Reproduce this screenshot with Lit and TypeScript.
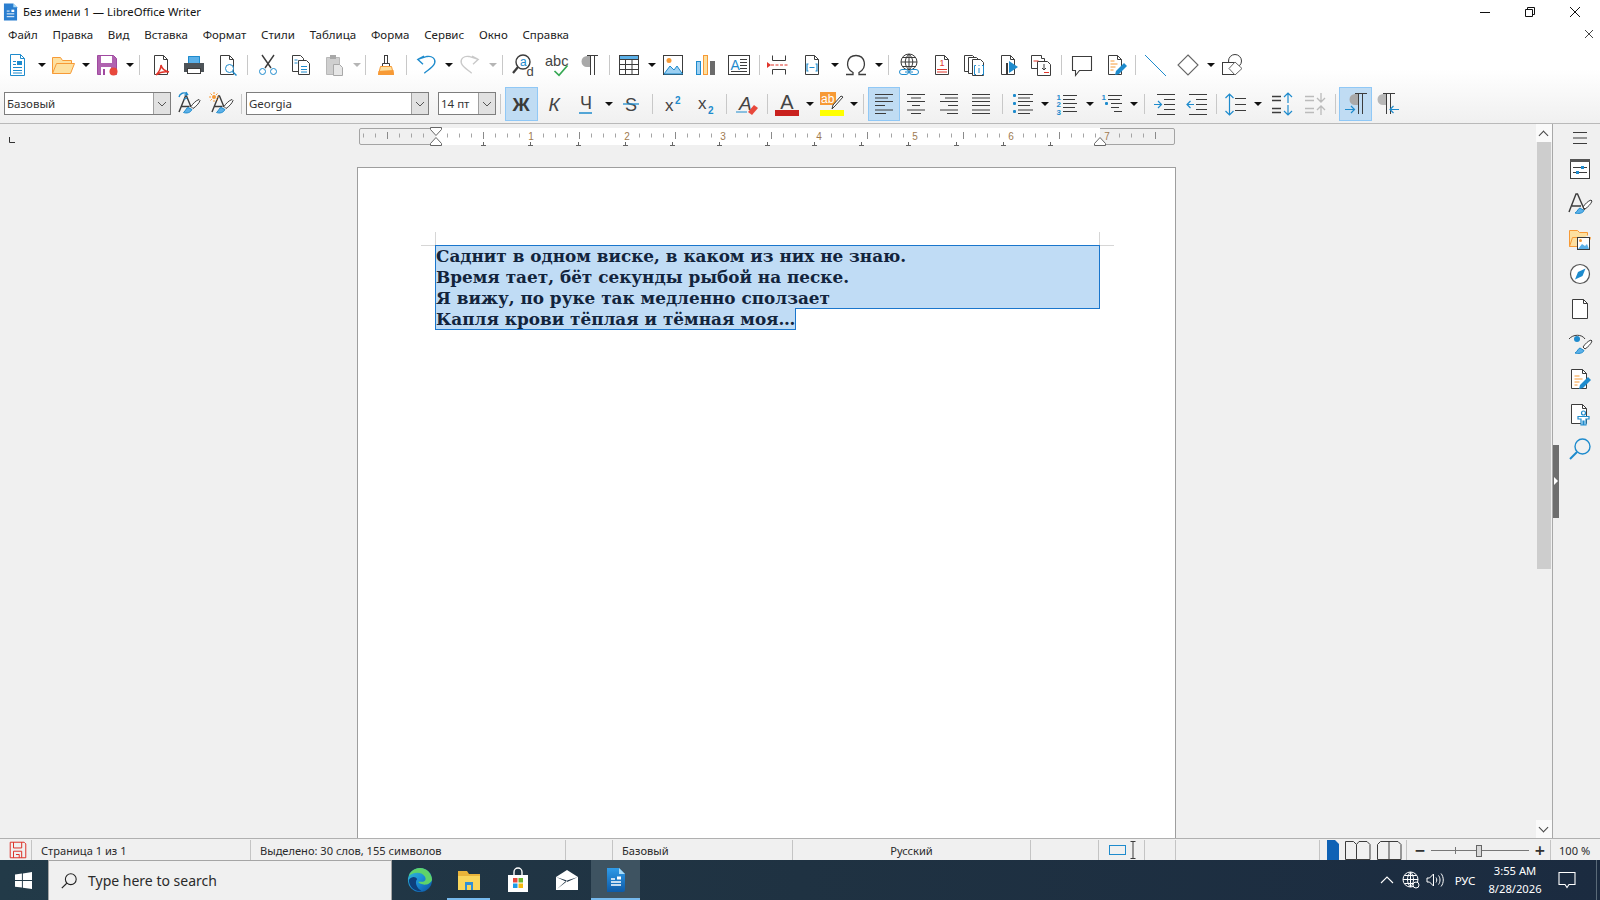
import { LitElement, html, css, svg, TemplateResult } from "lit";
import { customElement } from "lit/decorators.js";

const doc = svg`<path class="d fw" d="M5.5 2.5h9l4 4v15h-13z"/><path class="d" d="M14.5 2.5v4h4"/>`;
const brush = svg`<path class="d fw" d="M23 7.5c-3 1-6 4-8 7l2 2c3-2 6-5 7-8z"/><path class="b fl" d="M12 15.5c-2 .5-2 3-4.500 5 3 1 7 .5 8.500-3z"/>`;
const letterA = svg`<path class="d2" d="M3 20L9.500 4h1L15 15M5.500 14.500h8"/>`;
const alignRows = [2.5, 6, 9.5, 13.5, 18, 21.5];

// six text lines of an alignment icon; each pair is the start and end of a row
function aligned(spans: number[][]) {
  const d = spans.map(([a, z], i) => `M${a} ${alignRows[i]}H${z}`).join("");
  return svg`<path class="d" d="${d}"/>`;
}

const ICONS: Record<string, TemplateResult> = {
  new: svg`<path class="b fw" d="M3.500 1.500h10l4 4v17h-14z"/><path class="b" d="M13.500 1.500v4h4M6 8.500h3M6 11.500h3M6 14.500h9M6 17.500h9M6 20h9"/><rect class="fb" x="10" y="8" width="5" height="4"/>`,
  open: svg`<path class="o fy" d="M1.500 20.500V4.500h8l2 3h9v3"/><path class="o fy" d="M1.500 20.500l4-10h18l-4 10z"/>`,
  save: svg`<path fill="#b063b0" stroke="#a04aa0" d="M2.500 2.500h16l3 3v16h-19z"/><rect class="fw" x="6" y="3" width="11" height="7"/><rect class="fw" x="6" y="14" width="10" height="8"/><rect fill="#a04aa0" x="8" y="16" width="2" height="6"/><circle cx="18.500" cy="18.500" r="4" fill="#e8483c"/>`,
  pdf: svg`${doc}<path class="r" stroke-width="1.500" d="M7 22c3-3 5-7 5-10 1 4 3 6 8 7-5-1-9 0-13 3z"/>`,
  print: svg`<path fill="#4d5358" d="M2 10h20v9h-3v-3H5v3H2z"/><rect class="fl" x="6" y="3" width="12" height="7"/><path class="b" d="M6.500 10V3.500h11V10"/><rect class="fw d" x="5.500" y="15.500" width="13" height="5"/>`,
  preview: svg`${doc}<circle class="b fw" cx="14.500" cy="15.500" r="4"/><path class="b" stroke-width="1.500" d="M17.500 18.500l4 4"/>`,
  cut: svg`<path class="d2" d="M6 2l9 13M18 2L9 15"/><circle class="b" cx="6.500" cy="18.500" r="3"/><circle class="b" cx="17.500" cy="18.500" r="3"/>`,
  copy: svg`<path class="d fw" d="M3.500 2.500h8l3 3v13h-11z"/><path class="d fw" d="M9.500 7.500h8l3 3v11h-11z"/><path class="b" d="M12 13.500h6M12 16.500h6M12 19h6M5.500 7h3M5.500 10h3"/>`,
  paste: svg`<path fill="#cfcfcf" stroke="#b8b8b8" d="M4.500 4.500h13v17h-13z"/><rect fill="#a8a8a8" x="8" y="2" width="6" height="4"/><path fill="#e6e6e6" stroke="#a8a8a8" d="M11.500 11.500h6l3 3v8h-9z"/>`,
  clone: svg`<rect class="d fw" x="10.500" y="2.500" width="3" height="8"/><path class="d fw" d="M8.500 10.500h7v3h-7z"/><path class="o fy" d="M6.500 13.500h11l2 8h-15z"/><path fill="#f79a36" d="M4.500 18l15-1 .5 5H4z"/>`,
  undo: svg`<path class="b" stroke-width="1.300" d="M10 3L3.700 6.300 9 11.300M3.700 6.300L13 3.500C18 2.500 22 6 20.700 10c-1.200 4-6.700 7-10.400 10.300"/>`,
  redo: svg`<path stroke="#c9c9c9" stroke-width="1.300" d="M14 3l6.300 3.300-5.300 5M20.300 6.300L11 3.500C6 2.500 2 6 3.300 10c1.200 4 6.700 7 10.400 10.300"/>`,
  find: svg`<circle class="d2" cx="11" cy="9" r="7"/><path class="d" stroke-width="2.200" d="M6 14l-5 6"/><text class="tb" x="8" y="13" font-size="12">a</text><text class="td" x="14.500" y="23" font-size="13">d</text>`,
  abc: svg`<text class="td" x="0" y="13" font-size="14.500">abc</text><path stroke="#35a853" stroke-width="1.700" d="M9.500 18l4.500 4.300 8.500-9.800"/>`,
  pilcrow: svg`<path fill="#a9a9a9" d="M12 3H9a5.500 5.500 0 0 0 0 11h3z"/><path class="d" d="M12.500 3v19M16.500 3v19M9 2.500h11"/>`,
  table: svg`<rect class="fl" x="2" y="2" width="20" height="4"/><rect class="d" x="2.500" y="2.500" width="19" height="19"/><path class="d" d="M2.500 6.500h19M2.500 11.500h19M2.500 16.500h19M8.500 6.500v15M15 6.500v15"/>`,
  image: svg`<rect class="d fw" x="2.500" y="2.500" width="19" height="19"/><circle fill="#f79a36" cx="8" cy="7.500" r="2.500"/><path class="b" fill="#9cd0f2" d="M3 21l6-8 4 4 3-4 5.500 8z"/>`,
  chart: svg`<rect class="b" fill="#9cd0f2" x="2.500" y="8.500" width="4" height="13"/><rect class="o fy" x="9.500" y="2.500" width="4" height="19"/><rect fill="#6b6b6b" x="16" y="8" width="5" height="14"/>`,
  textbox: svg`<rect class="d fw" x="1.500" y="2.500" width="21" height="19"/><text class="tb" x="3.500" y="16.500" font-size="14">A</text><path class="d" d="M13 6.500h7M13 9.500h7M13 12.500h7M13 15.500h7M4 18.500h16"/>`,
  pbreak: svg`<path class="d" d="M5.500 2.500v5h13v-5M5.500 21.500v-5h13v5"/><path class="r" stroke-width="1.200" stroke-dasharray="3 1.500" d="M4 12h17"/><path fill="#e0352b" d="M0 9l4 3-4 3z"/>`,
  field: svg`${doc}<path class="b" stroke-width="1.200" d="M8.500 11H7v7h1.500M15.500 11H17v7h-1.500M9.500 14.500h5"/>`,
  omega: svg`<path class="d" stroke-width="1.300" d="M2 21.500h7v-2c-9-5-6-17 3-17s12 12 3 17v2h7"/>`,
  link: svg`<circle class="d" cx="12" cy="9" r="8"/><path class="d" d="M12 1v16M4 9h16M5.500 4.500h13M5.500 13.500h13M12 1c-5 5-5 11 0 16M12 1c5 5 5 11 0 16"/><rect class="b fw" x="2.500" y="16.500" width="9" height="5" rx="2.500"/><rect class="b fw" x="12.500" y="16.500" width="9" height="5" rx="2.500"/><path class="b" d="M8 19h8"/>`,
  footnote: svg`${doc}<text class="tred" x="9.500" y="13" font-size="9">1</text><path class="r" d="M7 16.500h10M7 19h10"/>`,
  endnote: svg`<path class="d fw" d="M1.500 2.500h8l3 3v13h-11z"/><path class="d fw" d="M5.500 4.500h8l3 3v13h-11z"/><path class="d fw" d="M9.500 6.500h8l3 3v13h-11z"/><path class="b" d="M13 12.500h-1.500v9H13M19 12.500h1.500v9H19"/><path class="b" d="M16 12v1M16 15v5"/>`,
  bookmark: svg`${doc}<path class="d" stroke-width="2" d="M11 10v12"/><path class="fb" d="M13 8l9 6-9 6z"/>`,
  crossref: svg`<path class="d fw" d="M2.500 2.500h10v3h3v10h-13z"/><path class="d fw" d="M8.500 8.500h10l3 3v11h-13z"/><path class="r" d="M4.500 8h5M15 19.500h5"/><path class="d" d="M15 11v6M13 15l2 2 2-2"/>`,
  comment: svg`<path class="d" stroke-width="1.100" d="M2.500 3.500h19v14H9.500l-4 5v-5h-3z"/>`,
  track: svg`${doc}<path class="o" d="M7.500 8h4M7.500 11h7M7.500 14h5M7.500 17h3"/><path class="fb" d="M12 22l1-4 8-8 3 3-8 8z"/>`,
  line: svg`<path class="b" d="M2 2l21 21"/>`,
  diamond: svg`<path stroke="#666" stroke-width="1.100" class="fw" d="M12 2l10 10-10 10L2 12z"/>`,
  shapes: svg`<circle class="d" cx="15" cy="8" r="6.500"/><rect class="d fw" x="2.500" y="9.500" width="12" height="12"/><path stroke="#666" class="fw" d="M15 9l7 6.500-7 6.500-6-6.500z"/>`,
  update: svg`${letterA}${brush}<path class="b" stroke-width="1.400" d="M3 5a5 5 0 0 1 8-3M10 0l1.500 2.500-3 .5M11 6a5 5 0 0 1-3 1"/>`,
  newstyle: svg`${letterA}${brush}<circle fill="#f79a36" cx="5" cy="5" r="2"/><path class="o" d="M5 0v2M5 8v2M0 5h2M8 5h2M1.500 1.500l1.500 1.500M7 7l1.500 1.500M8.500 1.500L7 3M3 7L1.500 8.500"/>`,
  bold: svg`<text class="tbold" x="12" y="18.500" font-size="19" text-anchor="middle">Ж</text>`,
  italic: svg`<text class="tdk" font-style="italic" x="12" y="18.500" font-size="19" text-anchor="middle">К</text>`,
  under: svg`<text class="tdk" x="12" y="17" font-size="18" text-anchor="middle">Ч</text><path class="b" stroke-width="1.500" d="M5 21h13"/>`,
  strike: svg`<text class="tdk" x="12" y="18.500" font-size="18" text-anchor="middle">S</text><path class="b" stroke-width="1.300" d="M4 12h16"/>`,
  sup: svg`<text class="tdk" x="4" y="19" font-size="17">x</text><text class="tbs" x="14" y="12" font-size="10">2</text>`,
  sub: svg`<text class="tdk" x="4" y="17" font-size="17">x</text><text class="tbs" x="14" y="22" font-size="10">2</text>`,
  clear: svg`<text class="tdk" font-style="italic" x="4" y="18" font-size="19">A</text><path class="b" d="M1 20h11"/><path fill="#e8483c" d="M13 20l6-7 4 3-6 7z"/>`,
  color: svg`<text class="tdk" x="12" y="16.500" font-size="20" text-anchor="middle">A</text><rect fill="#c9211e" x="0" y="18" width="24" height="6"/>`,
  hilite: svg`<rect fill="#f79a36" x="0" y="0" width="16" height="13"/><text fill="#fff" x="1" y="11" font-size="12">ab</text><path class="d fw" d="M23 5l-8 9-3 3 1-4 8-9z"/><rect fill="#ffff00" x="0" y="18" width="24" height="6"/>`,
  left: aligned([[3, 21], [3, 16], [3, 21], [3, 13], [3, 21], [3, 14]]),
  center: aligned([[3, 21], [7, 17], [3, 21], [8, 16], [3, 21], [7, 17]]),
  right: aligned([[3, 21], [8, 21], [3, 21], [11, 21], [3, 21], [10, 21]]),
  justify: aligned([[3, 21], [3, 21], [3, 21], [3, 21], [3, 21], [3, 21]]),
  bullets: svg`<path class="d" d="M7 2.500h15M7 6h12M7 9.500h15M7 13.500h12M7 18h15M7 21.500h12"/><rect class="fb" x="2" y="2" width="3" height="3" rx="1"/><rect class="fb" x="2" y="10" width="3" height="3" rx="1"/><rect class="fb" x="2" y="18" width="3" height="3" rx="1"/>`,
  numbers: svg`<path class="d" d="M8 3.500h14M8 7.500h12M8 11.500h14M8 15.500h12M8 19.500h14"/><text class="tbs" x="1.500" y="7.500" font-size="8">1</text><text class="tbs" x="1.500" y="15" font-size="8">2</text><text class="tbs" x="1.500" y="23" font-size="8">3</text>`,
  outline: svg`<path class="d" d="M8 3.500h14M8 7.500h12M11 11.500h11M11 15.500h8M14 19.500h8"/><text class="tbs" x="1.500" y="7.500" font-size="8">1</text><rect class="fb" x="5" y="10" width="3" height="3" rx="1"/>`,
  indent: svg`<path class="d" d="M4 2.500h18M11 7.500h11M11 12.500h11M11 17.500h11M4 22.500h18"/><path class="b" stroke-width="1.200" d="M1 12.500h7M5 9l3.500 3.500L5 16"/>`,
  outdent: svg`<path class="d" d="M4 2.500h18M11 7.500h11M11 12.500h11M11 17.500h11M4 22.500h18"/><path class="b" stroke-width="1.200" d="M2 12.500h7M5.500 9L2 12.500 5.500 16"/>`,
  spacing: svg`<path class="b" stroke-width="1.200" d="M5.500 2v21M1.500 6l4-4 4 4M1.500 19l4 4 4-4"/><path class="d" d="M11 6.500h11M11 12.500h11M11 18.500h11"/>`,
  incpar: svg`<path class="d" stroke-width="1.300" d="M1 4.500h9M1 8.500h9M1 16.500h9M1 20.500h9"/><path class="b" stroke-width="1.200" d="M17 11V1M13 5l4-4 4 4M17 13v10M13 19l4 4 4-4"/>`,
  decpar: svg`<path stroke="#bbb" stroke-width="1.300" d="M1 4.500h9M1 8.500h9M1 16.500h9M1 20.500h9M17 1v9M13 6l4 4 4-4M17 23v-9M13 18l4-4 4 4"/>`,
  ltr: svg`<path fill="#a9a9a9" d="M14 2h-3a5.500 5.500 0 0 0 0 11h3z"/><path class="d" d="M14.500 2v20M18.500 2v20M11 1.500h12"/><path class="b" stroke-width="1.200" d="M1 17.500h9M7 14l3.500 3.500L7 21"/>`,
  rtl: svg`<path fill="#b8b8b8" d="M10 2H7a5.500 5.500 0 0 0 0 11h3z"/><path class="d" d="M10.500 2v20M14.500 2v20M7 1.500h12"/><path class="b" stroke-width="1.200" d="M14 17.500h9M17.500 14L14 17.500l3.500 3.500"/>`,
  // sidebar
  sb_menu: svg`<path class="d" stroke-width="1.200" d="M5 6.500h14M5 12h14M5 17.500h14"/>`,
  sb_props: svg`<rect class="d fw" x="2.500" y="2.500" width="19" height="19"/><rect fill="#555" x="2" y="2" width="20" height="3"/><path class="d" d="M5 10.500h14M5 15.500h14"/><rect class="fb" x="13" y="9" width="3" height="3"/><rect class="fb" x="8" y="14" width="3" height="3"/>`,
  sb_styles: svg`<path class="d2" d="M1 20L8 2h1.500l7 16M4 14h9"/><path class="d fw" d="M23 8c-3 1-6 4-8 7l2 2c3-2 6-5 7-8z"/><path class="b fl" d="M12 16c-2 .5-2 3-5 5 3 1 8 .5 9-2.500z"/>`,
  sb_gallery: svg`<path class="o fy" d="M1.500 19.500V3.500h8l2 2h8v3"/><path class="o fy" d="M1.500 19.500l3-9h18l-3 9z"/><rect class="d fw" x="9.500" y="10.500" width="12" height="12"/><circle fill="#f79a36" cx="12.500" cy="13.500" r="1.500"/><path class="fl" d="M10 22l4-5 3 2 2-2 2 5z"/>`,
  sb_nav: svg`<circle stroke="#555" stroke-width="1.200" class="fw" cx="12" cy="12" r="9.500"/><path class="fb" d="M17.500 6.500l-3 7.500-7.500 3.500 3-7.500z"/>`,
  sb_page: svg`<path class="d fw" d="M4.500 2.500h11l4 4v15h-15z"/><path class="d" d="M15.500 2.500v4h4"/>`,
  sb_eye: svg`<path class="d" d="M1 7c4-5 13-5 16 0"/><circle class="fb" cx="9" cy="7" r="3"/><path class="d fw" d="M23 8c-3 1-6 4-8 7l2 2c3-2 6-5 7-8z"/><path class="b fl" d="M12 16c-2 .5-2 3-5 5 3 1 8 .5 9-2.500z"/>`,
  sb_track: svg`<path class="d fw" d="M3.500 2.500h11l4 4v15h-15z"/><path class="d" d="M14.500 2.500v4h4"/><path class="o" d="M6.500 9h5M6.500 12h8M6.500 15h5M6.500 18h3"/><path class="fb" d="M11 22l1-4 8-8 3 3-8 8z"/>`,
  sb_a11y: svg`<path class="d fw" d="M3.500 2.500h11l4 4v15h-15z"/><path class="d" d="M14.500 2.500v4h4"/><circle class="b fw" stroke-width="1.200" cx="15.500" cy="11" r="2"/><path class="b fw" stroke-width="1.200" d="M10 14.500h11v2.500h-3v6h-2v-4h-1v4h-2v-6h-3z"/>`,
  sb_find: svg`<circle class="b" stroke-width="1.400" cx="14.500" cy="9.500" r="7.500"/><path class="b" stroke-width="2" d="M9 15l-7 7"/>`,
  // status
  st_save: svg`<path class="sv" stroke-width="1.200" d="M1.500 1.500h17l2 2v17h-19z"/><path class="sv" stroke-width="1.200" d="M5.500 1.500v7h10v-7M5.500 20.500v-8h10v8M8.500 16.500h4v4"/>`,
  st_sel: svg`<rect class="b" x="0.500" y="5.500" width="16" height="9"/><path class="d" d="M21.500 1.500h5M21.500 18.500h5M24 1.500v17"/>`,
  st_single: svg`<path fill="#0f62b5" d="M3 0h8l4 4v16H3z"/>`,
  st_double: svg`<path class="d" d="M.5 1.500h8l3 3v15H.5zM11.500 4.500l2.500-3h8l3 3v15H11.500"/>`,
  st_book: svg`<path class="d" d="M.5 4.500l3-3h8.500v18H.5zM12 1.500h9l3 3v15H12"/>`,
};

// w on a separator or arrow is the gap the toolbar leaves there
type Item = { i?: string; k?: "dd" | "sep"; on?: boolean; off?: boolean; w?: number };
const b = (i: string, on = false): Item => ({ i, on });
const dd: Item = { k: "dd" };
const ddOff: Item = { k: "dd", off: true };
const sep = (w: number): Item => ({ k: "sep", w });

const ROW1: Item[] = [
  b("new"), dd, b("open"), dd, b("save"), dd, sep(10), b("pdf"), b("print"), b("preview"), sep(8),
  b("cut"), b("copy"), b("paste"), ddOff, sep(8), b("clone"), sep(7), b("undo"), dd, b("redo"), ddOff, sep(10),
  b("find"), b("abc"), b("pilcrow"), sep(6), b("table"), dd, b("image"), b("chart"), b("textbox"), sep(7),
  b("pbreak"), b("field"), dd, b("omega"), dd, sep(9), b("link"), b("footnote"), b("endnote"), b("bookmark"), b("crossref"), sep(8),
  b("comment"), b("track"), sep(7), b("line"), b("diamond"), dd, b("shapes"),
];
const ROW2A: Item[] = [b("update"), b("newstyle"), sep(9)];
const ROW2B: Item[] = [
  sep(9), b("bold", true), b("italic"), b("under"), dd, b("strike"), sep(10), b("sup"), b("sub"), sep(9), b("clear"), sep(7.5),
  b("color"), dd, b("hilite"), dd, sep(7.5), b("left", true), b("center"), b("right"), b("justify"), sep(9),
  b("bullets"), dd, b("numbers"), dd, b("outline"), dd, sep(8.25), b("indent"), b("outdent"), sep(6.5), b("spacing"), { k: "dd", w: 14.5 }, b("incpar"), b("decpar"), sep(7.5),
  b("ltr", true), b("rtl"),
];
const MENU = ["Файл", "Правка", "Вид", "Вставка", "Формат", "Стили", "Таблица", "Форма", "Сервис", "Окно", "Справка"];
const SIDE = ["sb_menu", "sb_props", "sb_styles", "sb_gallery", "sb_nav", "sb_page", "sb_eye", "sb_track", "sb_a11y", "sb_find"];

const chevron = svg`<svg class="chev" viewBox="0 0 10 6" width="10" height="6"><path stroke="#555" d="M1 1l4 4 4-4"/></svg>`;

function ruler() {
  const origin = 76.5;
  const ticks: TemplateResult[] = [];
  for (let n = -6; n <= 60; n++) {
    const x = origin + n * 12;
    if (x < 2 || x > 814) continue;
    if (n % 8 === 0) {
      if (n !== 0) ticks.push(svg`<text class="rn" x="${x - 0.5}" y="13" text-anchor="middle">${n / 8}</text>`);
    } else if (n % 4 === 0) {
      ticks.push(svg`<path stroke="#8a8a8a" d="M${x} 5v7"/>`);
    } else {
      ticks.push(svg`<path stroke="#a5a5a5" d="M${x} 6.500v4"/>`);
    }
  }
  const tabs: TemplateResult[] = [];
  for (let k = 0; k < 13; k++) {
    const x = Math.round(124 + k * 47.25) + 0.5;
    tabs.push(svg`<path stroke="#666" d="M${x} 15v3.500M${x - 2.500} 18.500h5"/>`);
  }
  return svg`<svg class="ruler" viewBox="0 0 817 19" width="817" height="19">
    <rect x="0.500" y="1.500" width="815" height="16" rx="1.500" fill="#f0f0f0" stroke="#a4a4a4"/>
    <rect x="77" y="1" width="664" height="17" fill="#fff"/>
    ${ticks}${tabs}
    <path stroke="#666" fill="#fff" d="M71.500 .5h11v2l-5.500 6-5.500-6zM71.500 18.500h11v-2l-5.500-6-5.500 6z"/>
    <path stroke="#666" fill="#fff" d="M735.500 18.500h11v-2l-5.500-6-5.500 6z"/>
  </svg>`;
}

@customElement("app-root")
export class AppRoot extends LitElement {
  private icon(name: string) {
    return html`<svg class="ico" viewBox="0 0 24 24" width="24" height="24">${ICONS[name]}</svg>`;
  }

  private items(list: Item[]) {
    return list.map((it) => {
      const gap = it.w ? `width:${it.w}px` : "";
      if (it.k === "dd") return html`<span class="dd ${it.off ? "off" : ""}" style=${gap}></span>`;
      if (it.k === "sep") return html`<span class="sep" style=${gap}></span>`;
      return html`<span class="btn ${it.on ? "on" : ""}">${this.icon(it.i!)}</span>`;
    });
  }

  private taskbar() {
    return html`
      <div class="taskbar">
        <div class="start">
          <svg viewBox="0 0 16 16" width="17" height="17"><path fill="#fff" d="M0 2.300l6.500-.9v6.200H0zM7.400 1.300L16 0v7.600H7.400zM0 8.500h6.500v6.200L0 13.800zM7.400 8.500H16V16l-8.600-1.200z"/></svg>
        </div>
        <div class="search">
          <svg viewBox="0 0 20 20" width="18" height="18"><circle stroke="#222" stroke-width="1.200" cx="12" cy="8" r="6"/><path stroke="#222" stroke-width="1.300" d="M7.500 12.500L2 18"/></svg>
          <span>Type here to search</span>
        </div>
        <div class="tile">
          <svg viewBox="0 0 28 28" width="26" height="26">
            <defs><linearGradient id="eg" x1="0" y1="0" x2="1" y2="1"><stop offset="0" stop-color="#35c1c9"/><stop offset=".5" stop-color="#1b8ed8"/><stop offset="1" stop-color="#0b4f9e"/></linearGradient></defs>
            <circle cx="14" cy="14" r="13" fill="url(#eg)"/>
            <path fill="#5fd36a" d="M27 14c0-7-6-13-13-13C8 1 3 5 2 10c3-4 13-6 17 0 2 3 1 6-3 6h-4c1 2 4 3 7 3 3 0 6-1 8-5z"/>
            <path fill="#0e3f7d" d="M11 13c-3 3-1 10 5 13-8 1-14-5-14-12 3-4 7-4 9-1z"/>
          </svg>
        </div>
        <div class="tile open">
          <svg viewBox="0 0 26 26" width="26" height="26"><path fill="#e9b43a" d="M2 4h9l2 3h11v5H2z"/><path fill="#f9d65c" d="M2 9h22v14H2z"/><path fill="#2f8fd8" d="M9 15h8v8h-2v-5h-4v5H9z"/></svg>
        </div>
        <div class="tile">
          <svg viewBox="0 0 26 26" width="26" height="26"><path stroke="#fff" stroke-width="1.400" d="M9 8V5a4 4 0 0 1 8 0v3"/><path fill="#fff" d="M3 8h20v17H3z"/><rect fill="#e8483c" x="8" y="11" width="4.500" height="4.500"/><rect fill="#6cb52d" x="13.500" y="11" width="4.500" height="4.500"/><rect fill="#1b9ce8" x="8" y="16.500" width="4.500" height="4.500"/><rect fill="#f5b90f" x="13.500" y="16.500" width="4.500" height="4.500"/></svg>
        </div>
        <div class="tile">
          <svg viewBox="0 0 26 26" width="26" height="26"><path fill="#fff" d="M2 10L13 3l11 7v13H2z"/><path fill="#1f3344" d="M2 10l11 5 11-5-11 3.500zM3 22l10-9 1 .5z"/></svg>
        </div>
        <div class="tile open active">
          <svg viewBox="0 0 26 26" width="26" height="28"><defs><linearGradient id="wg" x1="0" y1="0" x2="0" y2="1"><stop offset="0" stop-color="#2f9be8"/><stop offset="1" stop-color="#0d5aa7"/></linearGradient></defs><path fill="url(#wg)" d="M4 1h12l6 6v16a2 2 0 0 1-2 2H4z"/><path fill="#a9dcf8" d="M16 1l6 6h-6z"/><path stroke="#fff" stroke-width="1.500" d="M8 12h4M8 15h10M8 18h10"/><rect fill="#fff" x="14" y="9.500" width="4" height="3"/></svg>
        </div>
        <div class="tray">
          <span class="tc t24"><svg viewBox="0 0 14 8" width="14" height="8"><path stroke="#fff" stroke-width="1.100" d="M1 7l6-6 6 6"/></svg></span>
          <span class="tc t24"><svg viewBox="0 0 18 18" width="18" height="18"><circle stroke="#fff" cx="8.500" cy="8.500" r="7.500"/><path stroke="#fff" d="M8.500 1v15M1 8.500h15M2.500 4.500h12M2.500 12.500h12M8.500 1c-4 4-4 11 0 15M8.500 1c4 4 4 11 0 15"/><circle fill="#1f3040" stroke="#fff" cx="14" cy="14" r="3"/></svg></span>
          <span class="tc t24"><svg viewBox="0 0 18 16" width="18" height="16"><path stroke="#fff" d="M1 6h2.500L7.500 2v12l-4-4H1zM10 5.500c1 1.500 1 3.500 0 5M12.500 3.500c2 2.500 2 6.500 0 9M15 1.500c3 3.500 3 9.500 0 13"/></svg></span>
          <span class="tc lang">РУС</span>
          <span class="clock"><span>3:55 AM</span><span>8/28/2026</span></span>
          <span class="tc notif"><svg viewBox="0 0 18 18" width="18" height="18"><path stroke="#fff" stroke-width="1.100" d="M1 1.500h16v12h-6l-2 3-2-3H1z"/></svg></span>
          <span class="desk"></span>
        </div>
      </div>
    `;
  }

  private status() {
    return html`
      <div class="status">
        <div class="cell first"><svg viewBox="0 0 22 22" width="18" height="18">${ICONS.st_save}</svg></div>
        <div class="cell">Страница 1 из 1</div>
        <div class="cell">Выделено: 30 слов, 155 символов</div>
        <div class="cell"></div>
        <div class="cell">Базовый</div>
        <div class="cell mid">Русский</div>
        <div class="cell"></div>
        <div class="cell icon-cell"><svg viewBox="0 0 28 20" width="28" height="20">${ICONS.st_sel}</svg></div>
        <div class="cell"></div>
        <div class="cell"></div>
        <div class="cell views">
          <svg viewBox="0 0 15 20" width="15" height="20">${ICONS.st_single}</svg>
          <svg viewBox="0 0 26 20" width="26" height="20">${ICONS.st_double}</svg>
          <svg viewBox="0 0 26 20" width="26" height="20">${ICONS.st_book}</svg>
        </div>
        <div class="cell zoom">
          <span class="zm">−</span>
          <div class="slider"><i class="mark"></i><i class="thumb"></i></div>
          <span class="zm">+</span>
        </div>
        <div class="cell pct">100 %</div>
      </div>
    `;
  }

  render() {
    return html`
      <div class="app">
        <div class="title">
          <svg viewBox="0 0 16 18" width="15" height="18" class="appicon"><path fill="#2b7fd0" d="M1 0h10l4 4v14H1z"/><path fill="#a9dcf8" d="M11 0l4 4h-4z"/><path stroke="#fff" d="M4 8h3M4 11h8M4 14h8"/><rect fill="#fff" x="9" y="6.500" width="3" height="2.500"/></svg>
          <span class="ttext">Без имени 1 — LibreOffice Writer</span>
          <span class="wbtn"><svg viewBox="0 0 12 12" width="12" height="12"><path stroke="#111" d="M1 6.500h10"/></svg></span>
          <span class="wbtn"><svg viewBox="0 0 12 12" width="12" height="12"><path stroke="#111" d="M1.500 3.500h7v7h-7zM3.500 3.500v-2h7v7h-2"/></svg></span>
          <span class="wbtn"><svg viewBox="0 0 12 12" width="12" height="12"><path stroke="#111" d="M1 1l10 10M11 1L1 11"/></svg></span>
        </div>
        <div class="menu">
          ${MENU.map((m) => html`<span class="mi">${m}</span>`)}
          <span class="docx"><svg viewBox="0 0 10 10" width="10" height="10"><path stroke="#444" d="M1 1l8 8M9 1L1 9"/></svg></span>
        </div>
        <div class="bars">
          <div class="row one">${this.items(ROW1)}</div>
          <div class="row two">
            <div class="combo style"><span>Базовый</span><i class="arrow">${chevron}</i></div>
            ${this.items(ROW2A)}
            <div class="combo font"><span>Georgia</span><i class="arrow">${chevron}</i></div>
            <div class="combo size"><span>14 пт</span><i class="arrow">${chevron}</i></div>
            ${this.items(ROW2B)}
          </div>
        </div>
        <div class="work">
          <div class="docarea">
            <div class="rulerrow">
              <svg class="corner" viewBox="0 0 8 8" width="8" height="8"><path stroke="#333" d="M1.500 1v5.500H7"/></svg>
              ${ruler()}
            </div>
            <div class="page">
              <i class="crop tl"></i><i class="crop tr"></i>
              <div class="sel full">
                <div>Саднит в одном виске, в каком из них не знаю.</div>
                <div>Время тает, бёт секунды рыбой на песке.</div>
                <div>Я вижу, по руке так медленно сползает</div>
              </div>
              <div class="sel last">Капля крови тёплая и тёмная моя…</div>
            </div>
          </div>
          <div class="scroll">
            <span class="sarrow up"></span>
            <div class="track"><div class="sthumb"></div></div>
            <span class="sarrow down"></span>
          </div>
          <div class="side">
            <div class="handle"></div>
            ${SIDE.map((s) => html`<span class="sbtn">${this.icon(s)}</span>`)}
          </div>
        </div>
        ${this.status()} ${this.taskbar()}
      </div>
    `;
  }

  static styles = css`
    :host {
      display: block;
      width: 1600px;
      height: 900px;
      overflow: hidden;
      font-family: "Noto Sans", "Open Sans", sans-serif;
    }
    svg { fill: none; display: block; flex: none; overflow: visible; }
    .d { stroke: #3c3c3c; }
    .d2 { stroke: #3c3c3c; stroke-width: 1.4; }
    .b { stroke: #1e8bcd; }
    .o { stroke: #f79a36; }
    .r { stroke: #e0352b; }
    .sv { stroke: #dc2f26; }
    .fw { fill: #fff; }
    .fb { fill: #1e8bcd; }
    .fl { fill: #5bb0e8; }
    .fy { fill: #fde0a0; }
    text { font-family: "Liberation Sans", sans-serif; stroke: none; }
    .tb, .tbs { fill: #1e8bcd; }
    .tbs { font-weight: 700; }
    .td, .tdk { fill: #444; }
    .tred { fill: #e0352b; }
    .tbold { fill: #3a3a3a; font-weight: 700; }
    .rn { fill: #a07a50; font-size: 10px; }

    .app { display: flex; flex-direction: column; height: 900px; background: #f0f0f0; color: #222; }

    .title { height: 24px; box-sizing: border-box; padding: 0 3px 1px 0; display: flex; align-items: center; background: #fff; }
    .appicon { margin-left: 3px; }
    .ttext { margin-left: 5px; flex: 1; font-size: 11.3px; color: #111; }
    .wbtn { width: 45px; display: flex; justify-content: center; }

    .menu { height: 22px; box-sizing: border-box; padding: 0 0 2px 0.6px; display: flex; align-items: center; background: #fff; }
    .mi { padding: 0 7.4px; font-size: 11.5px; color: #222; }
    .docx { margin-left: auto; margin-right: 6px; }

    .bars { background: linear-gradient(#fff 0, #fff 30%, #f0f0f0 100%); border-bottom: 1px solid #b9b9b9; height: 77px; }
    .row { display: flex; align-items: center; }
    .one { height: 38px; padding-left: 2.5px; }
    .two { height: 39px; padding-left: 4px; }
    .btn { width: 32.5px; height: 34px; display: flex; align-items: center; justify-content: center; box-sizing: border-box; flex: none; }
    .one .btn { width: 33px; }
    .btn.on { background: #c0dcf3; border: 1px solid #90c8f6; }
    .dd { width: 12px; height: 6px; position: relative; flex: none; }
    .one .dd { width: 11px; }
    .dd::after { content: ""; position: absolute; left: 2px; top: 1px; border: 4px solid transparent; border-top: 4px solid #111; border-bottom: 0; }
    .dd.off::after { border-top-color: #b5b5b5; }
    .sep { height: 20px; flex: none; display: flex; justify-content: center; }
    .sep::after { content: ""; width: 1px; height: 20px; background: #c8c8c8; }

    .combo { height: 23px; box-sizing: border-box; background: #fff; border: 1px solid #7e7e7e; display: flex; align-items: center; flex: none; font-size: 11.5px; color: #333; }
    .combo span { flex: 1; padding-left: 2px; }
    .arrow { width: 16px; align-self: stretch; background: #e1e1e1; border-left: 1px solid #a0a0a0; display: flex; align-items: center; justify-content: center; }
    .style { width: 167px; margin-right: 1px; }
    .font { width: 183px; }
    .size { width: 58px; margin-left: 9px; }

    .work { flex: 1; display: flex; min-height: 0; }
    .docarea { flex: 1; min-width: 0; overflow: hidden; }
    .rulerrow { height: 43px; display: flex; align-items: flex-start; padding-top: 3px; box-sizing: border-box; }
    .corner { margin: 9px 0 0 8px; }
    .ruler { margin-left: 343px; }
    .page { position: relative; width: 819px; height: 1000px; margin-left: 357px; box-sizing: border-box; background: #fff; border: 1px solid #9e9e9e; padding: 77px 0 0 77px; font-family: "DejaVu Serif", serif; font-weight: 700; font-size: 16.85px; line-height: 20.75px; color: #12243c; }
    .sel { background: #c0dcf5; border: 1px solid #1a76cc; box-sizing: border-box; white-space: nowrap; }
    .full { width: 665px; height: 64px; }
    .last { width: 361px; height: 22px; margin-top: -1px; border-top: 0; position: relative; padding-top: 1px; }
    .crop { position: absolute; background: #d6d6d6; }
    .tl { left: 63px; top: 77px; width: 14px; height: 1px; }
    .tl::after { content: ""; position: absolute; left: 14px; top: -13px; width: 1px; height: 13px; background: #d6d6d6; }
    .tr { left: 742px; top: 77px; width: 14px; height: 1px; }
    .tr::after { content: ""; position: absolute; left: -1px; top: -13px; width: 1px; height: 13px; background: #d6d6d6; }

    .scroll { width: 16px; display: flex; flex-direction: column; background: #f0f0f0; }
    .sarrow { height: 18px; position: relative; flex: none; background: #fafafa; }
    .sarrow::after { content: ""; position: absolute; left: 4px; top: 6px; width: 6px; height: 6px; border-left: 1.5px solid #444; border-top: 1.5px solid #444; transform: translateY(2px) rotate(45deg); }
    .sarrow.down::after { transform: translateY(-2px) rotate(225deg); }
    .track { flex: 1; padding: 0 1px; }
    .sthumb { height: 427px; background: #cdcdcd; }

    .side { width: 48px; box-sizing: border-box; border-left: 1px solid #a8a8a8; position: relative; display: flex; flex-direction: column; align-items: center; padding: 0 0 0 6px; }
    .sbtn { height: 34.9px; display: flex; align-items: center; flex: none; }
    .sbtn:first-of-type { height: 28px; }
    .handle { position: absolute; left: 0; top: 321px; width: 6px; height: 73px; background: #6e6e6e; }
    .handle::after { content: ""; position: absolute; left: 1px; top: 32px; border: 4px solid transparent; border-left: 4px solid #fff; border-right: 0; }

    .status { height: 22px; display: grid; grid-template-columns: 31px 219px 315px 47px 180px 238px 68px 46px 31px 144px 87px 144px 50px; background: #f0f0f0; border-top: 1px solid #b0b0b0; box-sizing: border-box; font-size: 11.1px; color: #2a2a2a; }
    .cell { border-left: 1px solid #c4c4c4; margin: 1px 0 2px; padding-left: 9px; display: flex; align-items: center; white-space: nowrap; min-width: 0; }
    .first { border-left: 0; }
    .mid { justify-content: center; padding: 0; }
    .icon-cell { padding-left: 10px; }
    .views { gap: 6px; padding-left: 3.5px; }
    .zoom { padding-left: 6px; gap: 3px; }
    .zm { font-size: 18px; font-weight: 600; line-height: 18px; width: 14px; text-align: center; color: #333; }
    .slider { position: relative; width: 98px; height: 1px; background: #777; margin: 0 1px; }
    .mark { position: absolute; left: 24px; top: -3px; width: 1px; height: 7px; background: #777; }
    .thumb { position: absolute; left: 45px; top: -5px; width: 4px; height: 10px; background: #d8d8d8; border: 1px solid #666; }
    .pct { padding-left: 8px; }

    .taskbar { height: 40px; flex: none; display: flex; align-items: center; background: linear-gradient(90deg, #223a48, #1f3242 50%, #1b2b40); color: #fff; }
    .start { width: 47px; display: flex; justify-content: center; margin-right: 1px; }
    .search { width: 344px; height: 40px; margin-right: 3px; box-sizing: border-box; background: #f0f0f0; border: 1px solid #a5a5a5; border-bottom: 0; display: flex; align-items: center; padding-left: 11px; gap: 10px; color: #2a2a2a; font-size: 14px; }
    .tile { width: 49px; height: 40px; display: flex; align-items: center; justify-content: center; position: relative; box-sizing: border-box; flex: none; }
    .tile.open::after { content: ""; position: absolute; left: 3px; right: 3px; bottom: 0; height: 2px; background: #76b9ed; }
    .tile.active { background: #3e5361; }
    .tile.active::after { left: 0; right: 0; }
    .tray { margin-left: auto; display: flex; align-items: center; height: 40px; }
    .tc { display: flex; justify-content: center; align-items: center; }
    .t24 { width: 24px; }
    .lang { width: 36px; font-size: 11.5px; }
    .clock { width: 64px; display: flex; flex-direction: column; align-items: center; font-size: 11.2px; line-height: 18px; }
    .notif { width: 40px; }
    .desk { width: 4px; height: 40px; box-sizing: border-box; border-left: 1px solid #5a6a78; margin-left: 9px; }
  `;
}
